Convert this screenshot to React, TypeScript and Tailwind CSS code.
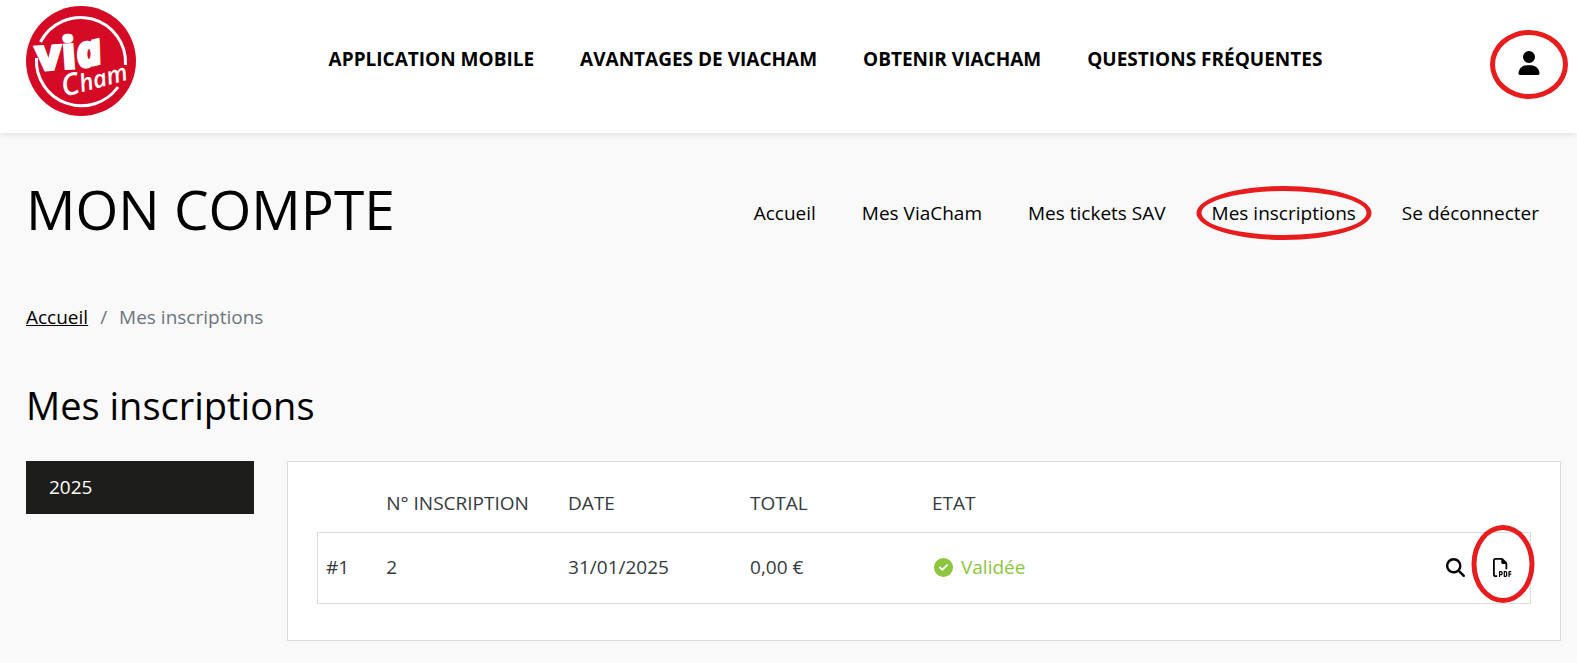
import { FaCircleCheck, FaMagnifyingGlass, FaRegFilePdf, FaUser } from 'react-icons/fa6';

const mainLinks = ['Application mobile', 'Avantages de ViaCham', 'Obtenir ViaCham', 'Questions fréquentes'];
const accountLinks = ['Accueil', 'Mes ViaCham', 'Mes tickets SAV', 'Mes inscriptions', 'Se déconnecter'];

const orders = [{ id: '2', date: '31/01/2025', total: '0,00 €', state: 'Validée' }];

function Logo() {
  return (
    <svg viewBox="0 0 110 110" className="size-[110px]" role="img" aria-label="ViaCham">
      <circle cx="55" cy="55" r="55" fill="#d50a25" />
      <path d="M14.5 36 A45 45 0 0 1 99.5 59" fill="none" stroke="#fff" strokeWidth="3" />
      <path d="M92 81 A45 45 0 0 1 10.5 52" fill="none" stroke="#fff" strokeWidth="3" />
      <g fill="#fff" stroke="#fff" strokeWidth="2" className="font-['Open_Sans'] text-[44px] font-extrabold">
        <text x="10" y="65" transform="rotate(-4 10 65)">
          vi
        </text>
        <text x="53" y="63" transform="rotate(-14 53 63)" className="italic">
          a
        </text>
      </g>
      <text
        x="38"
        y="91"
        transform="rotate(-15 38 91)"
        fill="#fff"
        className="font-['Open_Sans'] text-[24px] font-semibold italic"
      >
        <tspan className="text-[30px]">C</tspan>
        ham
      </text>
    </svg>
  );
}

// Red ring drawn over the item it is placed in
function Ring({ className }: { className: string }) {
  return (
    <span
      aria-hidden="true"
      className={`pointer-events-none absolute left-1/2 -translate-x-1/2 rounded-[50%] border-[5px] border-[#e81c1c] ${className}`}
    />
  );
}

export default function App() {
  return (
    <div className="min-h-screen bg-[#f9f9f9] font-['Open_Sans','Noto_Sans',sans-serif] text-[19px] leading-7 text-black">
      <header className="flex items-center bg-white pt-1.5 pr-4 pb-[17px] pl-[26px] shadow-[0_0_8px_rgba(0,0,0,0.15)]">
        <a href="#" className="pr-[18px]">
          <Logo />
        </a>
        <nav className="flex flex-1 justify-center gap-[46px] pb-1 font-bold uppercase">
          {mainLinks.map((label) => (
            <a key={label} href="#">
              {label}
            </a>
          ))}
        </nav>
        <button type="button" aria-label="Mon compte" className="relative px-5 pt-1">
          <FaUser className="size-6" />
          <Ring className="-top-[17px] h-[69px] w-[78px]" />
        </button>
      </header>

      <main className="pr-4 pb-6 pl-[26px]">
        <div className="flex items-center justify-between pt-[42px]">
          <h1 className="text-[55px] leading-[67px] uppercase">Mon compte</h1>
          <nav className="flex gap-[46px] pt-2 pr-[22px]">
            {accountLinks.map((label) => (
              <a key={label} href="#" className="relative">
                {label}
                {label === 'Mes inscriptions' && <Ring className="-top-[13px] h-[54px] w-[175px]" />}
              </a>
            ))}
          </nav>
        </div>

        <nav aria-label="Fil d'Ariane" className="flex gap-3 pt-[61px] text-[#6c757d]">
          <a href="#" className="text-black underline">
            Accueil
          </a>
          <span>/</span>
          <span>Mes inscriptions</span>
        </nav>

        <h2 className="pt-[51px] text-[38px] leading-[46px]">Mes inscriptions</h2>

        <div className="flex items-start gap-[33px] pt-[33px]">
          <button type="button" className="w-[228px] shrink-0 bg-[#1d1d1b] px-[23px] py-3 text-left leading-[29px] text-white">
            2025
          </button>

          <section className="flex-1 border border-[#dcdcdc] bg-white px-[29px] pt-6 pb-9">
            <table className="w-full table-fixed border-collapse text-left text-[#343a40]">
              <thead>
                <tr className="uppercase">
                  <td className="w-[5%]" />
                  <th className="w-[15%] px-2 pt-[3px] pb-[15px] font-normal whitespace-nowrap">N° inscription</th>
                  <th className="w-[15%] px-2 pt-[3px] pb-[15px] font-normal">Date</th>
                  <th className="w-[15%] px-2 pt-[3px] pb-[15px] font-normal">Total</th>
                  <th className="px-2 pt-[3px] pb-[15px] font-normal">Etat</th>
                  <td />
                </tr>
              </thead>
              <tbody>
                {orders.map((order, i) => (
                  <tr key={order.id} className="h-[71px] border border-[#dcdcdc]">
                    <td className="px-2 pb-0.5">#{i + 1}</td>
                    <td className="px-2 pb-0.5">{order.id}</td>
                    <td className="px-2 pb-0.5">{order.date}</td>
                    <td className="px-2 pb-0.5">{order.total}</td>
                    <td className="px-2 pb-0.5">
                      <span className="flex items-center gap-2 pl-0.5 text-[#8cc63f]">
                        <FaCircleCheck />
                        {order.state}
                      </span>
                    </td>
                    <td className="px-[18px] pb-0.5">
                      <span className="flex items-center justify-end gap-7 text-black">
                        <button type="button" aria-label="Voir">
                          <FaMagnifyingGlass />
                        </button>
                        <button type="button" aria-label="Télécharger le PDF" className="relative">
                          <FaRegFilePdf />
                          <Ring className="-top-[33px] h-[78px] w-[63px]" />
                        </button>
                      </span>
                    </td>
                  </tr>
                ))}
              </tbody>
            </table>
          </section>
        </div>
      </main>
    </div>
  );
}
